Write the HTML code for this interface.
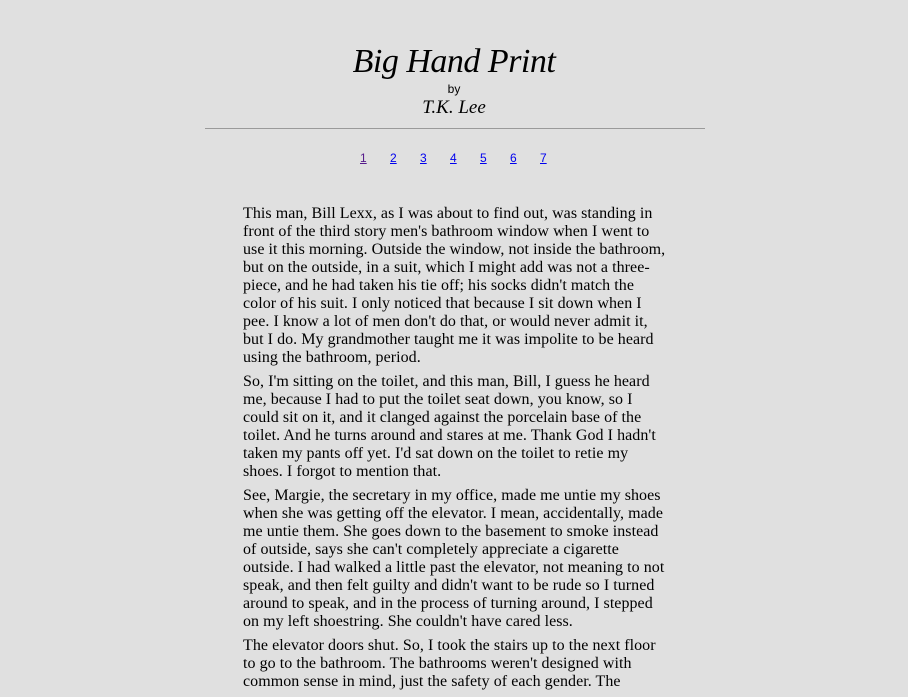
<!DOCTYPE html>
<html><head><meta charset="utf-8"><style>
body{margin:0;background:#e0e0e0;width:908px;height:692px;overflow:hidden;font-family:"Liberation Serif",serif;color:#000}
h1{position:absolute;top:42px;left:0;width:908px;text-align:center;margin:0;font-style:italic;font-weight:normal;font-size:34px;line-height:40px;letter-spacing:-0.5px}
.by{position:absolute;top:82px;width:908px;text-align:center;font:12px "Liberation Sans",sans-serif}
.au{position:absolute;top:97px;width:908px;text-align:center;font-style:italic;font-size:19px;line-height:22px}
hr{position:absolute;top:128px;left:205px;width:500px;margin:0;border:0;border-top:1px solid #9a9a9a}
.nav{position:absolute;top:151px;left:360px;font:12px "Liberation Sans",sans-serif}
.nav a{color:#00e;position:absolute;width:10px}
.nav a:first-child{color:#551a8b}
.t{position:absolute;top:205px;left:243px;width:430px;font-size:16px;line-height:18px;letter-spacing:0.05px}
.t p{margin:0 0 6px;white-space:nowrap}
</style></head><body>
<h1>Big Hand Print</h1>
<div class="by">by</div>
<div class="au">T.K. Lee</div>
<hr>
<div class="nav"><a style="left:0" href="#">1</a><a style="left:30px" href="#">2</a><a style="left:60px" href="#">3</a><a style="left:90px" href="#">4</a><a style="left:120px" href="#">5</a><a style="left:150px" href="#">6</a><a style="left:180px" href="#">7</a></div>
<div class="t">
<p>This man, Bill Lexx, as I was about to find out, was standing in<br>front of the third story men's bathroom window when I went to<br>use it this morning. Outside the window, not inside the bathroom,<br>but on the outside, in a suit, which I might add was not a three-<br>piece, and he had taken his tie off; his socks didn't match the<br>color of his suit. I only noticed that because I sit down when I<br>pee. I know a lot of men don't do that, or would never admit it,<br>but I do. My grandmother taught me it was impolite to be heard<br>using the bathroom, period.</p>
<p>So, I'm sitting on the toilet, and this man, Bill, I guess he heard<br>me, because I had to put the toilet seat down, you know, so I<br>could sit on it, and it clanged against the porcelain base of the<br>toilet. And he turns around and stares at me. Thank God I hadn't<br>taken my pants off yet. I'd sat down on the toilet to retie my<br>shoes. I forgot to mention that.</p>
<p>See, Margie, the secretary in my office, made me untie my shoes<br>when she was getting off the elevator. I mean, accidentally, made<br>me untie them. She goes down to the basement to smoke instead<br>of outside, says she can't completely appreciate a cigarette<br>outside. I had walked a little past the elevator, not meaning to not<br>speak, and then felt guilty and didn't want to be rude so I turned<br>around to speak, and in the process of turning around, I stepped<br>on my left shoestring. She couldn't have cared less.</p>
<p>The elevator doors shut. So, I took the stairs up to the next floor<br>to go to the bathroom. The bathrooms weren't designed with<br>common sense in mind, just the safety of each gender. The</p>
</div>
</body></html>
